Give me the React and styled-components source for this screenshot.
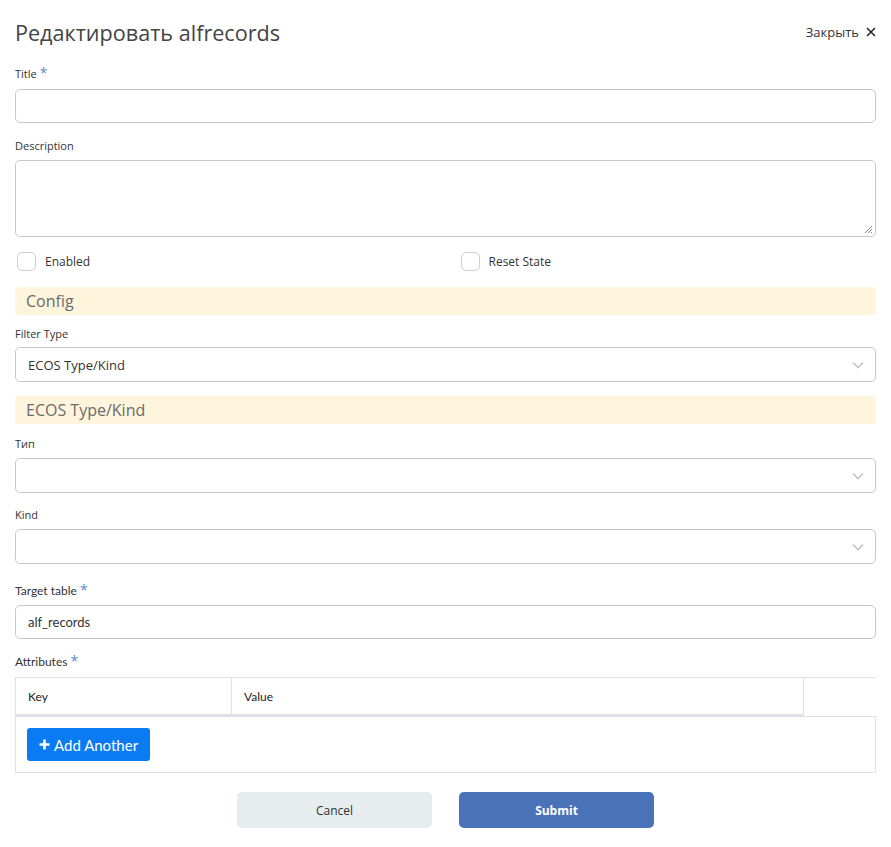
import React from "react";
import styled, { createGlobalStyle } from "styled-components";

const GlobalStyle = createGlobalStyle`
  body {
    margin: 0;
    background: #fff;
    font-family: "Open Sans", "Liberation Sans", sans-serif;
    color: #444;
  }
`;

const Page = styled.div`
  padding: 16px 15px 18px 15px;
  width: 861px;
`;

const Header = styled.div`
  display: flex;
  align-items: center;
  justify-content: space-between;
  height: 32px;
  margin-bottom: 17px;
`;

const Heading = styled.h1`
  margin: 0;
  font-size: 21.6px;
  font-weight: 400;
  color: #444;
`;

const CloseLink = styled.button`
  border: 0;
  background: none;
  padding: 0;
  font-family: inherit;
  font-size: 13px;
  color: #333;
  display: flex;
  align-items: center;
  gap: 7px;
  cursor: pointer;
`;

const Field = styled.div`
  margin-bottom: ${(p) => p.$mb ?? 22}px;
`;

const Label = styled.div`
  font-family: ${(p) => (p.$lato ? '"Lato", sans-serif' : "inherit")};
  font-size: ${(p) => (p.$lato ? 12 : 11)}px;
  color: #333;
  height: 16px;
  line-height: 16px;
  margin-bottom: ${(p) => p.$gap ?? 8}px;
`;

const Star = styled.span`
  font-family: "Open Sans", sans-serif;
  color: #5b8bd6;
  font-size: 14px;
  margin-left: 3px;
`;

const Input = styled.div`
  box-sizing: border-box;
  height: ${(p) => p.$h ?? 34}px;
  border: 1.5px solid #c8c8c8;
  border-radius: 5px;
  display: flex;
  align-items: center;
  padding: 0 12px;
  font-size: 13px;
  color: #333;
  font-family: ${(p) => (p.$lato ? '"Lato", sans-serif' : "inherit")};
  position: relative;
`;

const Grip = styled.svg`
  position: absolute;
  right: 2px;
  bottom: 2px;
`;

const Chevron = styled.svg`
  margin-left: auto;
  margin-right: -1px;
`;

const CheckRow = styled.div`
  display: grid;
  grid-template-columns: 1fr 1fr;
  column-gap: 28px;
  margin: 14px 0 16px 2px;
`;

const Check = styled.label`
  display: flex;
  align-items: center;
  gap: 8px;
  font-size: 12px;
  color: #333;
  height: 20px;
`;

const Box = styled.span`
  box-sizing: border-box;
  width: 19px;
  height: 19px;
  border: 1.5px solid #cfcfcf;
  border-radius: 5px;
  margin-right: 1px;
`;

const Panel = styled.div`
  background: #fff4dc;
  border-radius: 4px;
  height: 28px;
  display: flex;
  align-items: center;
  padding: 0 11px;
  font-size: 16px;
  color: #6b6b6b;
  margin-bottom: ${(p) => p.$mb ?? 12}px;
`;

const Table = styled.div`
  font-family: "Lato", sans-serif;
  font-size: 12px;
  color: #222;
`;

const HeadRow = styled.div`
  display: grid;
  grid-template-columns: 216px 573px 1fr;
  height: 38px;
  border-top: 1px solid #dfe1e4;
`;

const HeadCell = styled.div`
  display: flex;
  align-items: center;
  padding: 0 12px;
  border-left: ${(p) => (p.$bare ? "0" : "1px solid #dfe1e4")};
  border-right: ${(p) => (p.$last ? "1px solid #dfe1e4" : "0")};
  border-bottom: ${(p) => (p.$bare ? "0" : "2px solid #dfe1e4")};
`;

const Body = styled.div`
  border: 1px solid #dfe1e4;
  height: 55px;
  display: flex;
  align-items: center;
  padding: 0 11px;
`;

const AddButton = styled.button`
  display: flex;
  align-items: center;
  gap: 4px;
  height: 33px;
  padding: 0 12px;
  border: 0;
  border-radius: 3px;
  background: #0a7bf3;
  color: #fff;
  font-family: "Lato", sans-serif;
  font-size: 15px;
`;

const Actions = styled.div`
  display: flex;
  justify-content: center;
  gap: 27px;
  margin-top: 19px;
`;

const Button = styled.button`
  width: 195px;
  height: 36px;
  border: 0;
  border-radius: 5px;
  font-family: "Open Sans", sans-serif;
  font-size: 12px;
  font-weight: ${(p) => (p.$primary ? 700 : 400)};
  background: ${(p) => (p.$primary ? "#4a72b8" : "#e7ecee")};
  color: ${(p) => (p.$primary ? "#fff" : "#333")};
`;

const ChevronIcon = () => (
  <Chevron width="12" height="8" viewBox="0 0 12 8">
    <path d="M1 1.5l5 5 5-5" fill="none" stroke="#c4c4c4" strokeWidth="1.6" />
  </Chevron>
);

const Select = ({ value }) => (
  <Input $h={35}>
    {value}
    <ChevronIcon />
  </Input>
);

export default function App() {
  return (
    <Page>
      <GlobalStyle />
      <Header>
        <Heading>Редактировать alfrecords</Heading>
        <CloseLink>
          Закрыть
          <svg width="10" height="10" viewBox="0 0 10 10">
            <path d="M1 1l8 8M9 1l-8 8" stroke="#222" strokeWidth="1.5" />
          </svg>
        </CloseLink>
      </Header>

      <Field $mb={15}>
        <Label>
          Title<Star>*</Star>
        </Label>
        <Input />
      </Field>

      <Field $mb={0}>
        <Label $gap={6}>Description</Label>
        <Input $h={77}>
          <Grip width="9" height="9" viewBox="0 0 9 9">
            <path d="M8 1L1 8M8 4L4 8M8 7L7 8" stroke="#777" strokeWidth="0.9" />
          </Grip>
        </Input>
      </Field>

      <CheckRow>
        <Check>
          <Box />
          Enabled
        </Check>
        <Check>
          <Box />
          Reset State
        </Check>
      </CheckRow>

      <Panel $mb={11}>Config</Panel>

      <Field $mb={14}>
        <Label $gap={5}>Filter Type</Label>
        <Select value="ECOS Type/Kind" />
      </Field>

      <Panel $mb={12}>ECOS Type/Kind</Panel>

      <Field $mb={14}>
        <Label $gap={6}>Тип</Label>
        <Select />
      </Field>

      <Field $mb={18}>
        <Label $gap={6}>Kind</Label>
        <Select />
      </Field>

      <Field $mb={14}>
        <Label $lato $gap={7}>
          Target table<Star>*</Star>
        </Label>
        <Input $lato>alf_records</Input>
      </Field>

      <Field $mb={0}>
        <Label $lato $gap={8}>
          Attributes<Star>*</Star>
        </Label>
        <Table>
          <HeadRow>
            <HeadCell>Key</HeadCell>
            <HeadCell $last>Value</HeadCell>
            <HeadCell $bare />
          </HeadRow>
          <Body>
            <AddButton>
              <svg width="11" height="11" viewBox="0 0 11 11">
                <path d="M5.5 0.5v10M0.5 5.5h10" stroke="#fff" strokeWidth="2.6" />
              </svg>
              Add Another
            </AddButton>
          </Body>
        </Table>
      </Field>

      <Actions>
        <Button>Cancel</Button>
        <Button $primary>Submit</Button>
      </Actions>
    </Page>
  );
}
